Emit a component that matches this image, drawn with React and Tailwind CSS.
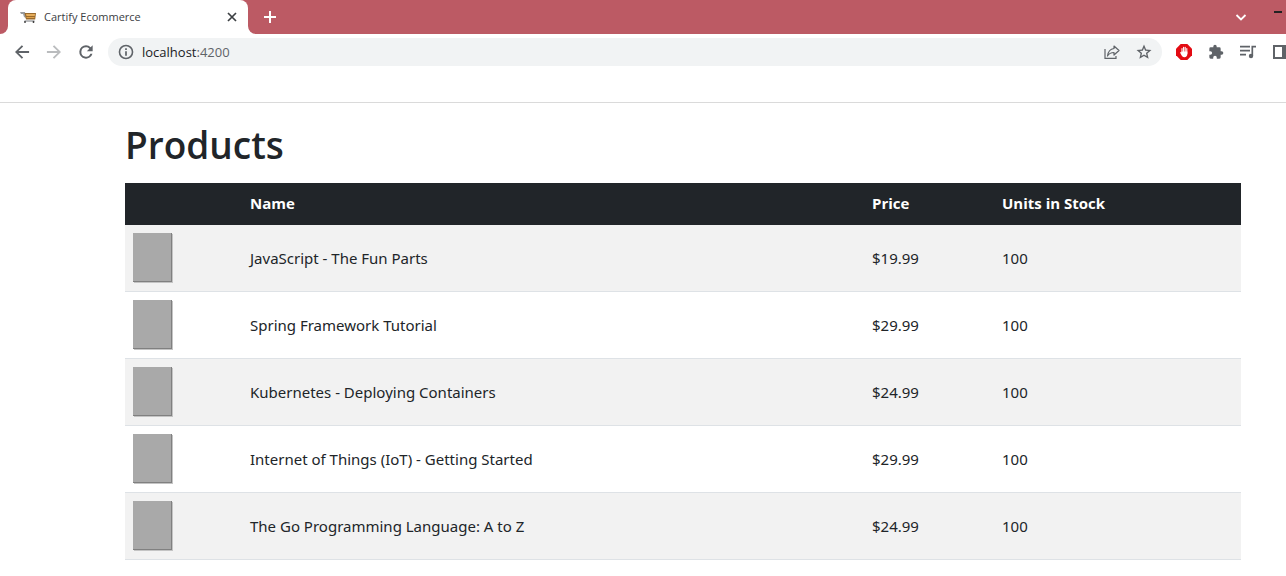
import React from "react";

const products = [
  { name: "JavaScript - The Fun Parts", price: "$19.99", stock: 100 },
  { name: "Spring Framework Tutorial", price: "$29.99", stock: 100 },
  { name: "Kubernetes - Deploying Containers", price: "$24.99", stock: 100 },
  { name: "Internet of Things (IoT) - Getting Started", price: "$29.99", stock: 100 },
  { name: "The Go Programming Language: A to Z", price: "$24.99", stock: 100 },
];

function Cart() {
  return (
    <svg viewBox="0 0 16 16" className="h-4 w-4 shrink-0" aria-hidden="true">
      <path d="M0 3h5l1 6-2-1-1-3H1z" fill="#9a9da1" />
      <path d="M4.500 4H16l-.8 6.500H6z" fill="#9a6a2c" />
      <path d="M6 5h9l-.3 2H6.500z" fill="#e5ad5c" />
      <path d="M6.500 8.500h8" stroke="#e0a24a" strokeWidth="1" />
      <path d="M4.500 12h10" stroke="#77797c" strokeWidth="1" />
      <circle cx="5" cy="13" r=".9" fill="#333" />
      <circle cx="13.500" cy="13" r=".9" fill="#333" />
    </svg>
  );
}

function Icon({ d, className = "h-5 w-5" }) {
  return (
    <svg viewBox="0 0 24 24" className={`${className} shrink-0 fill-current`} aria-hidden="true">
      <path d={d} />
    </svg>
  );
}

const paths = {
  back: "M20.500 10.800H7.830l5.590-5.390L11.800 3.800 3.600 12l8.200 8.200 1.610-1.610L7.830 13.200H20.500z",
  forward: "M12.200 3.800l-1.610 1.610 5.580 5.390H3.500v2.400h12.670l-5.580 5.390 1.610 1.610 8.200-8.200z",
  reload:
    "M17.650 6.350A7.960 7.960 0 0 0 12 4a8 8 0 1 0 7.730 10h-2.480A5.600 5.600 0 1 1 12 6.400c1.560 0 2.940.6 3.920 1.680L13 11h7V4l-2.350 2.350z",
  info: "M10.700 6.500h2.600v2.600h-2.600zm0 4.200h2.600v6.800h-2.600zM12 1a11 11 0 1 0 0 22 11 11 0 0 0 0-22zm0 19.600a8.600 8.600 0 1 1 0-17.200 8.600 8.600 0 0 1 0 17.200z",
  star: "M22 9.240l-7.190-.62L12 2 9.190 8.630 2 9.240l5.460 4.730L5.820 21 12 17.270 18.180 21l-1.630-7.030L22 9.240zM12 15.200l-3.500 2.100.93-3.980-3.090-2.680 4.080-.35L12 6.500l1.590 3.760 4.080.35-3.090 2.680.93 3.980L12 15.200z",
  puzzle:
    "M20.500 11H19V7a2 2 0 0 0-2-2h-4V3.500a2.500 2.500 0 0 0-5 0V5H4a2 2 0 0 0-1.990 2v3.800H3.500a2.700 2.700 0 0 1 0 5.400H2V20a2 2 0 0 0 2 2h3.800v-1.500a2.700 2.700 0 0 1 5.400 0V22H17a2 2 0 0 0 2-2v-4h1.500a2.500 2.500 0 0 0 0-5z",
};

function TabStrip() {
  return (
    <div className="flex h-[34px] bg-[#bc5a64]">
      <div className="flex w-2 bg-white">
        <div className="flex-1 rounded-br-lg bg-[#bc5a64]" />
      </div>
      <div className="flex w-60 items-center rounded-t-lg bg-white pr-[10px] pl-3">
        <Cart />
        <span className="ml-2 flex-1 text-[11px] leading-4 text-[#3c4043]">Cartify Ecommerce</span>
        <button aria-label="Close tab" className="text-[#3c4043]">
          <svg viewBox="0 0 12 12" className="h-3 w-3" aria-hidden="true">
            <path d="M2 2l8 8M10 2l-8 8" stroke="currentColor" strokeWidth="1.700" />
          </svg>
        </button>
      </div>
      <div className="flex w-2 bg-white">
        <div className="flex-1 rounded-bl-lg bg-[#bc5a64]" />
      </div>
      <button aria-label="New tab" className="ml-2 text-white">
        <svg viewBox="0 0 12 12" className="h-3 w-3" aria-hidden="true">
          <path d="M6 0v12M0 6h12" stroke="currentColor" strokeWidth="2" />
        </svg>
      </button>
      <div className="flex-1" />
      <button aria-label="Search tabs" className="mr-[27px] text-white">
        <svg viewBox="0 0 12 12" className="h-3 w-3" aria-hidden="true">
          <path d="M1.500 4L6 8.500 10.500 4" fill="none" stroke="currentColor" strokeWidth="1.800" />
        </svg>
      </button>
      <button aria-label="Minimize" className="mr-1 flex items-start pt-[11px]">
        <span className="h-[2px] w-2 bg-[#222]" />
      </button>
    </div>
  );
}

function Toolbar() {
  return (
    <div className="flex h-9 items-center overflow-hidden bg-white pl-3 text-[#5f6368]">
      <button aria-label="Back"><Icon d={paths.back} /></button>
      <button aria-label="Forward" className="ml-3 text-[#babcbe]"><Icon d={paths.forward} /></button>
      <button aria-label="Reload" className="ml-3"><Icon d={paths.reload} /></button>
      <div className="ml-3 flex h-7 flex-1 items-center rounded-full bg-[#f1f3f4] pr-[9px] pl-[10px]">
        <button aria-label="Site information"><Icon d={paths.info} className="h-4 w-4" /></button>
        <span className="ml-2 flex-1 text-[13px] leading-5 text-[#202124]">
          localhost<span className="text-[#5f6368]">:4200</span>
        </span>
        <button aria-label="Share">
          <svg viewBox="0 0 16 16" className="h-4 w-4" fill="none" stroke="currentColor" strokeWidth="1.200" aria-hidden="true">
            <path d="M1 5v9.400h11V12" />
            <path d="M10 2l5 4.500-5 4.500V8.500C7 8.500 5 9.500 3.500 12 4 8 6.500 5 10 4.500z" strokeLinejoin="round" />
          </svg>
        </button>
        <button aria-label="Bookmark" className="ml-[15px]"><Icon d={paths.star} className="h-[18px] w-[18px]" /></button>
      </div>
      <button aria-label="Ad blocker" className="ml-[14px]">
        <svg viewBox="0 0 16 16" className="h-4 w-4" aria-hidden="true">
          <path d="M4.700 0h6.600L16 4.700v6.600L11.300 16H4.700L0 11.300V4.700z" fill="#e30b13" />
          <path d="M6 9V4.600M7.600 8V3.200M9.200 8V3.200M10.800 9.500V4.600" stroke="#fff" strokeWidth="1.100" strokeLinecap="round" />
          <path d="M5.450 7.500h5.900v2.500c0 2-1.100 3.200-2.900 3.200-1.700 0-2.500-1-3.200-2.400L4 8.500l1-.4.500.6z" fill="#fff" />
        </svg>
      </button>
      <button aria-label="Extensions" className="ml-4"><Icon d={paths.puzzle} className="h-4 w-4" /></button>
      <button aria-label="Media controls" className="ml-4">
        <svg viewBox="0 0 16 16" className="h-4 w-4" aria-hidden="true">
          <path d="M0 2.700h10M0 6.700h10M0 10.700h6M12.300 12V2.700H16" fill="none" stroke="currentColor" strokeWidth="1.700" />
          <circle cx="11" cy="12" r="2.200" fill="currentColor" />
        </svg>
      </button>
      <button aria-label="Side panel" className="ml-[17px] w-[13px] overflow-hidden">
        <svg viewBox="0 0 16 14" className="h-[14px] w-4" aria-hidden="true">
          <path d="M0 0h16v14H0zM2 2v10h7V2z" fill="currentColor" fillRule="evenodd" />
        </svg>
      </button>
    </div>
  );
}

export default function App() {
  return (
    <div className="min-h-screen bg-white font-['Open_Sans','Noto_Sans',sans-serif] text-[#212529]">
      <TabStrip />
      <Toolbar />
      <div className="h-[33px] border-b border-[#dadada]" />
      <main className="mr-[45px] ml-[125px] pt-[18px]">
        <h1 className="mb-[14px] text-[37px] leading-[48px] font-semibold">Products</h1>
        <table className="w-full table-fixed border-separate border-spacing-0 text-left text-[15px] leading-6">
          <colgroup>
            <col className="w-[117px]" />
            <col />
            <col className="w-[130px]" />
            <col className="w-[247px]" />
          </colgroup>
          <thead className="bg-[#212529] text-white">
            <tr>
              <th aria-label="Image" />
              <th className="px-2 pt-2 pb-[10px] font-bold">Name</th>
              <th className="px-2 pt-2 pb-[10px] font-bold">Price</th>
              <th className="px-2 pt-2 pb-[10px] font-bold">Units in Stock</th>
            </tr>
          </thead>
          <tbody className="font-['Noto_Sans','Open_Sans',sans-serif]">
            {products.map((p) => (
              <tr key={p.name} className="odd:bg-[#f2f2f2]">
                <td className="border-b border-[#dee2e6] px-2 pt-2 pb-[9px]">
                  <div className="h-[49px] w-[39px] border-r border-b border-[#808080] bg-[#a9a9a9] shadow-[1px_1px_0_#c4c4c4]" />
                </td>
                <td className="border-b border-[#dee2e6] p-2">{p.name}</td>
                <td className="border-b border-[#dee2e6] p-2">{p.price}</td>
                <td className="border-b border-[#dee2e6] p-2">{p.stock}</td>
              </tr>
            ))}
          </tbody>
        </table>
      </main>
    </div>
  );
}
